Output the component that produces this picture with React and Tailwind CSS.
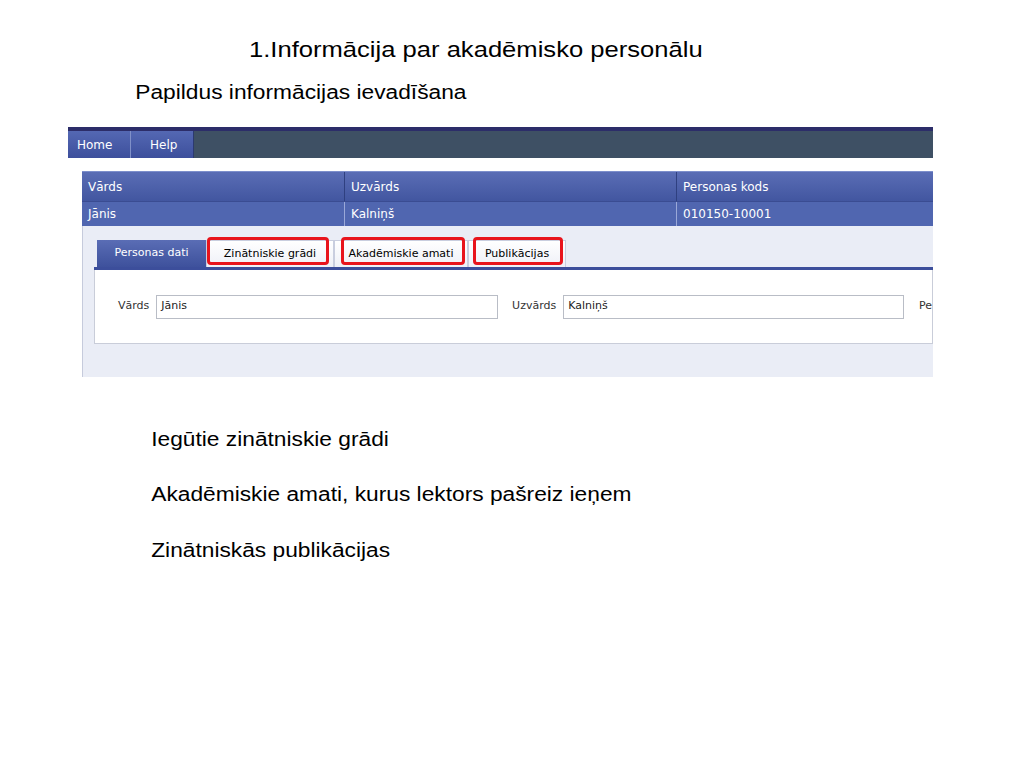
import React from 'react';

const ui = { fontFamily: 'Tahoma, "DejaVu Sans", "Liberation Sans", sans-serif' };
const arial = { fontFamily: '"Liberation Sans", Arial, sans-serif' };

function Tab({ label, active, width, box }) {
  return (
    <div
      className={
        'relative flex h-[27px] items-center justify-center text-[11px] ' +
        (active
          ? 'bg-gradient-to-b from-[#5a6db5] to-[#3e519c] text-white'
          : 'border border-b-0 border-[#c9cedf] bg-gradient-to-b from-[#ffffff] to-[#eef0f7] text-black')
      }
      style={{ width }}
    >
      {label}
      {box && (
        <span
          className="absolute top-[-4px] rounded-[4px] border-[3px] border-[#e8141c]"
          style={{ left: box[0], width: box[1], height: 28 }}
        />
      )}
    </div>
  );
}

function Slide({ children, className }) {
  // slide text is stretched horizontally in the picture
  return <div className={'origin-left scale-x-[1.137] whitespace-nowrap ' + className}>{children}</div>;
}

export default function App() {
  return (
    <div className="relative h-[768px] w-[1024px] overflow-hidden bg-white text-black" style={arial}>
      <Slide className="pt-[36px] pl-[219px] text-[22.5px] leading-[28px]">1.Informācija par akadēmisko personālu</Slide>
      <Slide className="mt-[16px] pl-[119px] text-[20px] leading-[24px]">Papildus informācijas ievadīšana</Slide>

      {/* nav bar */}
      <div className="ml-[68px] mt-[23px] w-[865px]" style={ui}>
        <div className="h-[4px] bg-[#2c2d69]" />
        <div className="flex h-[27px] bg-[#3e5064] text-[12px] text-white">
          <div className="flex w-[63px] items-center border-r border-[#8090c8] bg-gradient-to-b from-[#5468b3] to-[#3d4f9c] pl-[9px]">Home</div>
          <div className="flex w-[63px] items-center border-r border-[#2c3a70] bg-gradient-to-b from-[#5468b3] to-[#3d4f9c] pl-[19px]">Help</div>
        </div>
      </div>

      {/* person grid */}
      <div className="ml-[82px] mt-[13px] w-[851px] text-[12px] text-white" style={ui}>
        <div className="grid h-[30px] grid-cols-[263px_332px_256px] border-t border-[#7d8fcc] bg-gradient-to-b from-[#5a6db5] to-[#4256a0]">
          <div className="flex items-center border-r border-[#2f4080] pl-[6px]">Vārds</div>
          <div className="flex items-center border-r border-[#2f4080] pl-[6px]">Uzvārds</div>
          <div className="flex items-center pl-[6px]">Personas kods</div>
        </div>
        <div className="grid h-[25px] grid-cols-[263px_332px_256px] border-t border-[#3a4c92] bg-[#5066b0]">
          <div className="flex items-center border-r border-[#9aa8d8] pl-[6px]">Jānis</div>
          <div className="flex items-center border-r border-[#9aa8d8] pl-[6px]">Kalniņš</div>
          <div className="flex items-center pl-[6px]">010150-10001</div>
        </div>

        {/* detail panel */}
        <div className="h-[151px] border-l border-[#c6cbdc] bg-[#eaedf6] pt-[14px] pl-[11px] text-black">
          <div className="flex pl-[3px]">
            <Tab label="Personas dati" active width={109} />
            <Tab label="Zinātniskie grādi" width={128} box={[0, 122]} />
            <Tab label="Akadēmiskie amati" width={134} box={[6, 124]} />
            <Tab label="Publikācijas" width={98} box={[4, 90]} />
          </div>
          <div className="h-[3px] bg-[#3c4e9b]" />
          <div className="flex h-[74px] items-center border-x border-b border-[#c9cdd9] bg-white text-[11px] text-[#222]">
            <span className="ml-[23px] text-[#333]">Vārds</span>
            <div className="ml-[7px] flex h-[24px] w-[343px] items-center border border-[#b9bdc6] bg-white pl-[4px]">Jānis</div>
            <span className="ml-[14px] text-[#333]">Uzvārds</span>
            <div className="ml-[7px] flex h-[24px] w-[342px] items-center border border-[#b9bdc6] bg-white pl-[4px]">Kalniņš</div>
            <span className="ml-[15px] text-[#333]">Pe</span>
          </div>
        </div>
      </div>

      <div className="text-[20px] leading-[24px]">
        <Slide className="mt-[50px] pl-[133px]">Iegūtie zinātniskie grādi</Slide>
        <Slide className="mt-[31px] pl-[133px]">Akadēmiskie amati, kurus lektors pašreiz ieņem</Slide>
        <Slide className="mt-[32px] pl-[133px]">Zinātniskās publikācijas</Slide>
      </div>
    </div>
  );
}
